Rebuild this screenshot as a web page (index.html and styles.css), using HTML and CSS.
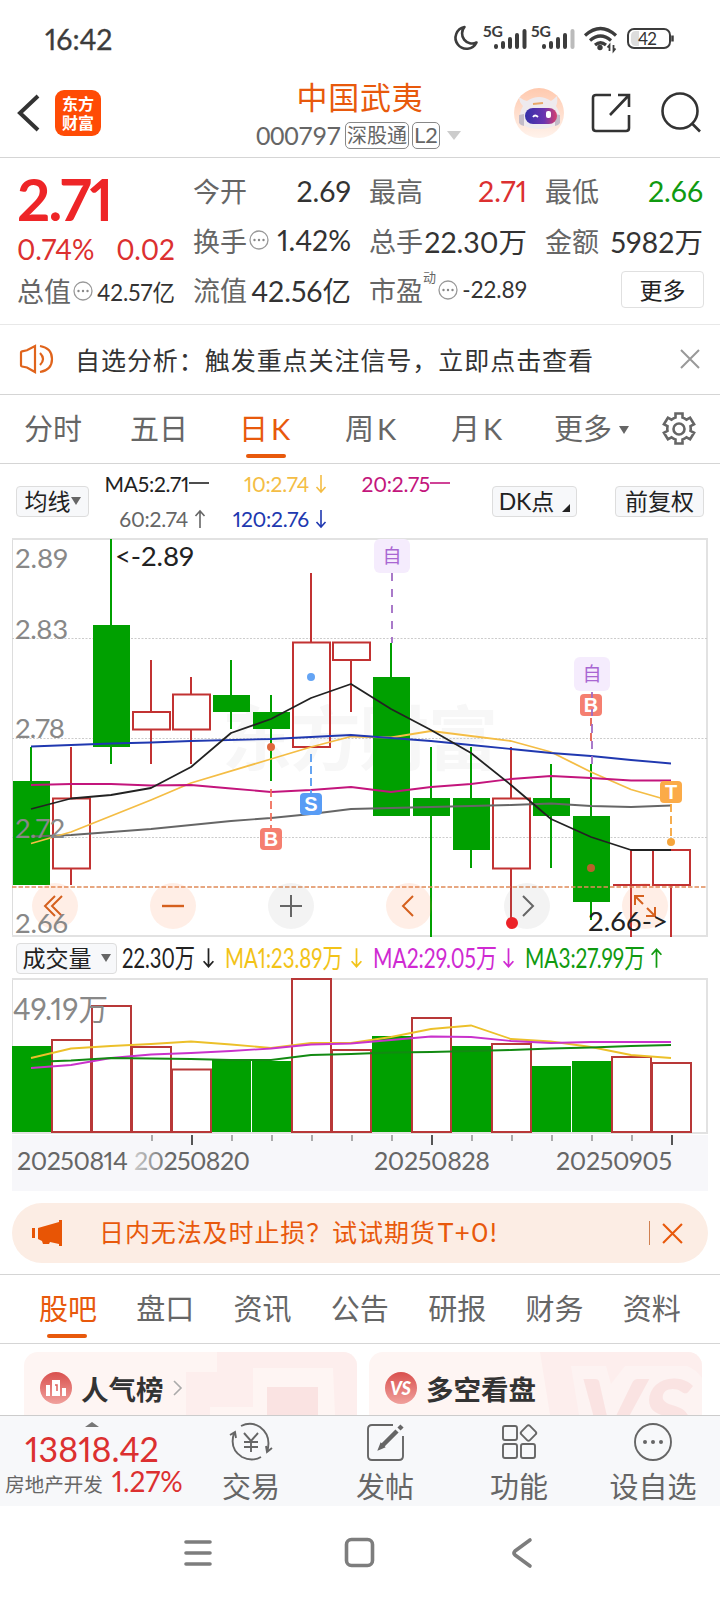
FILE: index.html
```html
<!DOCTYPE html>
<html lang="zh-CN">
<head>
  <meta charset="UTF-8" />
  <meta name="viewport" content="width=device-width, initial-scale=1.0" />
  <title>中国武夷 000797</title>
  <link rel="stylesheet" href="styles.css">
</head>
<body>
  <!-- shared icons -->
  <svg class="defs" width="0" height="0">
    <symbol id="down" viewBox="0 0 12 20"><path d="M6 1v17M1.500 13L6 18l4.500-5" fill="none" stroke="currentColor" stroke-width="1.600"/></symbol>
    <symbol id="up" viewBox="0 0 12 20"><path d="M6 19V2M1.500 7L6 2l4.500 5" fill="none" stroke="currentColor" stroke-width="1.600"/></symbol>
    <symbol id="flat" viewBox="0 0 20 20"><path d="M0 9h20" stroke="currentColor" stroke-width="1.600"/></symbol>
    <symbol id="more" viewBox="0 0 20 20"><circle cx="10" cy="10" r="9" fill="none" stroke="#999" stroke-width="1.300"/><g fill="#888"><circle cx="5.500" cy="10" r="1.200"/><circle cx="10" cy="10" r="1.200"/><circle cx="14.500" cy="10" r="1.200"/></g></symbol>
    <symbol id="close" viewBox="0 0 20 20"><path d="M1 1l18 18M19 1L1 19" fill="none" stroke="currentColor" stroke-width="2"/></symbol>
  </svg>

  <!-- STATUS BAR -->
  <div class="status">
    <span class="clock">16:42</span>
    <svg width="224" height="30" viewBox="452 24 224 30">
      <path d="M465.500 27a11 11 0 1 0 12 15.500a10 10 0 0 1-12-15.500z" fill="none" stroke="#3c3c3c" stroke-width="2.600" stroke-linejoin="round"/>
      <g font-size="15" font-weight="bold" fill="#3c3c3c"><text x="484" y="37" textLength="20" lengthAdjust="spacingAndGlyphs">5G</text><text x="532" y="37" textLength="20" lengthAdjust="spacingAndGlyphs">5G</text></g>
      <g stroke="#3c3c3c" stroke-width="4" stroke-linecap="round">
        <path d="M497 46v1M504 43v4M511 39v8M518 35v12M525.500 31v16"/>
        <path d="M545 46v1M552 43v4M559 39v8M566 35v12"/>
        <path d="M573.500 31v16" stroke="#bbb"/>
      </g>
      <g fill="none" stroke="#3c3c3c" stroke-width="3.200">
        <path d="M586 35.500q15.500-14 31 0M591 40.500q10.500-9 21 0M596 45q5.500-4.500 11 0"/>
      </g>
      <circle cx="601" cy="47.500" r="2.700" fill="#3c3c3c"/>
      <path d="M610.500 51v-6l-2 2.500M614.500 45v6l2-2.500" fill="none" stroke="#3c3c3c" stroke-width="1.800"/>
      <rect x="629" y="29" width="42" height="19" rx="6" fill="#fff" stroke="#3c3c3c" stroke-width="2"/>
      <path d="M637 31h3v15h-3q-5 0-5-5v-5q0-5 5-5z" fill="#ddd"/>
      <path d="M673.500 35.500v6" stroke="#3c3c3c" stroke-width="2.500"/>
      <text x="639" y="45" font-size="17" textLength="19" fill="#333">42</text>
    </svg>
  </div>

  <!-- HEADER -->
  <header class="header">
    <svg class="back" width="24" height="38" viewBox="0 0 24 38"><path d="M21 2L3 19l18 17" fill="none" stroke="#333" stroke-width="4"/></svg>
    <div class="logo"><span>东方</span><span>财富</span></div>
    <div class="stock">
      <div class="stock-name">中国武夷</div>
      <div class="stock-code"><span class="code">000797</span><span class="tag">深股通</span><span class="tag">L2</span><i class="caret light"></i></div>
    </div>
    <svg class="bot" width="50" height="50" viewBox="0 0 50 50">
      <defs>
        <linearGradient id="halo" x1="0" y1="0" x2="0" y2="1"><stop offset="0" stop-color="#ffc9ae"/><stop offset="1" stop-color="#fff3ec"/></linearGradient>
        <linearGradient id="visor"><stop offset="0" stop-color="#3430a8"/><stop offset=".6" stop-color="#6a35b0"/><stop offset="1" stop-color="#d8406c"/></linearGradient>
      </defs>
      <circle cx="25" cy="25" r="25" fill="url(#halo)"/>
      <path d="M5 9q4 3 8 4 12-8 24 0 3-2 6-5 1 6-1 10 5 8 4 14-3 8-20 9-17 0-20-9-1-7 3-14-4-4-4-9z" fill="#eeeaee"/>
      <path d="M5 27v8q2 3 5 3V26zM46 27v8q-2 3-5 3V26z" fill="#c3bcc8"/>
      <rect x="11" y="20" width="32" height="16" rx="8" fill="url(#visor)"/>
      <path d="M19 16l10-1" stroke="#e8a86a" stroke-width="2"/>
      <path d="M19 29q2-3 5 0" fill="none" stroke="#fff" stroke-width="1.800"/>
      <rect x="32" y="23" width="5" height="7" rx="2" fill="#fff"/>
    </svg>
    <svg class="share" width="40" height="40" viewBox="0 0 40 40"><path d="M20 2H5q-3 0-3 3v30q0 3 3 3h30q3 0 3-3V22M27 2h11v12M38 2L19 22" fill="none" stroke="#333" stroke-width="2.600"/></svg>
    <svg class="search" width="42" height="42" viewBox="0 0 42 42"><circle cx="20" cy="19" r="17.500" fill="none" stroke="#333" stroke-width="2.600"/><path d="M31.500 31L40 39.500" stroke="#333" stroke-width="2.600"/></svg>
  </header>

  <!-- QUOTE -->
  <section class="quote">
    <div class="col">
      <div class="price">2.71</div>
      <div class="cell red change"><span>0.74%</span><span>0.02</span></div>
      <div class="cell small"><label>总值<svg class="info"><use href="#more"/></svg></label><b>42.57亿</b></div>
    </div>
    <div class="col">
      <div class="cell"><label>今开</label><b>2.69</b></div>
      <div class="cell"><label>换手<svg class="info"><use href="#more"/></svg></label><b>1.42%</b></div>
      <div class="cell"><label>流值</label><b>42.56亿</b></div>
    </div>
    <div class="col">
      <div class="cell"><label>最高</label><b class="red">2.71</b></div>
      <div class="cell"><label>总手</label><b>22.30万</b></div>
      <div class="cell small"><label>市盈<sup>动</sup><svg class="info"><use href="#more"/></svg></label><b>-22.89</b></div>
    </div>
    <div class="col">
      <div class="cell"><label>最低</label><b class="green">2.66</b></div>
      <div class="cell"><label>金额</label><b>5982万</b></div>
      <div class="cell end"><button class="more-btn">更多</button></div>
    </div>
  </section>

  <!-- NOTICE -->
  <div class="notice">
    <svg width="36" height="30" viewBox="0 0 36 30" fill="none" stroke="#e0641c" stroke-width="2.200"><path d="M3 8.500q0-1 1-1.200l5-1L17 2v26l-8-4.500-5-1q-1-.2-1-1.200zM22 9q6 6 0 12M22 2q12 2 12 13t-12 13"/></svg>
    <span class="notice-text">自选分析：触发重点关注信号，立即点击查看</span>
    <svg class="notice-close" width="20" height="20"><use href="#close"/></svg>
  </div>

  <!-- PERIOD TABS -->
  <nav class="tabs">
    <a>分时</a><a>五日</a><a class="on">日<span class="k">K</span></a><a>周<span class="k">K</span></a><a>月<span class="k">K</span></a><a>更多<i class="caret"></i></a>
    <svg class="gear" width="36" height="36" viewBox="0 0 36 36" fill="none" stroke="#666" stroke-width="2.600"><path d="M14.500 2.500h7v4q2 .7 4 2.200l3.600-2 4 6.500-3.600 2q.4 2.300 0 4.600l3.600 2-4 6.500-3.600-2q-2 1.500-4 2.200v4h-7v-4q-2-.7-4-2.200l-3.600 2-4-6.500 3.600-2q-.4-2.300 0-4.600l-3.600-2 4-6.500 3.600 2q2-1.500 4-2.200z"/><circle cx="18" cy="18" r="5.500"/></svg>
  </nav>

  <!-- MA LEGEND -->
  <div class="ma">
    <button class="chip ma-btn">均线<i class="caret"></i></button>
    <div class="ma-grid">
      <span class="c5">MA5:2.71<svg width="20" height="20"><use href="#flat"/></svg></span>
      <span class="c10">10:2.74<svg class="arrow"><use href="#down"/></svg></span>
      <span class="c20">20:2.75<svg width="20" height="20"><use href="#flat"/></svg></span>
      <span class="c60">60:2.74<svg class="arrow"><use href="#up"/></svg></span>
      <span class="c120">120:2.76<svg class="arrow"><use href="#down"/></svg></span>
    </div>
    <button class="chip dk-btn">DK点<i class="corner"></i></button>
    <button class="chip fq-btn">前复权</button>
  </div>

  <!-- K LINE -->
  <svg class="kline" width="720" height="400" viewBox="0 538 720 400">
    <text x="222" y="765" font-size="70" font-weight="bold" fill="#f7f7f7" textLength="276">东方财富</text>
    <path d="M12.500 538v399" stroke="#ddd"/>
    <path d="M12 539h695v397H12" fill="none" stroke="#e2e2e2" stroke-width="2"/>
    <path d="M12 638.500h696M12 738.500h696M12 837.500h696" stroke="#ccc" stroke-dasharray="2 1.500"/>

    <!-- falling days -->
    <g fill="#00a000">
      <path d="M13 781h37v104H13zM93 625h37v122H93zM213 695h37v17h-37zM253 712h37v17h-37zM373 677h37v139h-37zM413 798h37v18h-37zM453 798h37v52h-37zM533 798h37v18h-37zM573 816h37v86h-37z"/>
      <path d="M30 747h2v34h-2zM110 539h2v86h-2zM110 747h2v17h-2zM230 660h2v69h-2zM270 695h2v86h-2zM390 643h2v34h-2zM430 747h2v190h-2zM470 747h2v121h-2zM550 764h2v104h-2zM590 764h2v156h-2z"/>
    </g>
    <!-- rising days -->
    <g fill="none" stroke="#c23232" stroke-width="2">
      <path d="M53 798.500h37v70H53zM133 712h37v17.500h-37zM173 694.500h37v35h-37zM293 642.500h37v104.500h-37zM333 642.500h37v17.500h-37zM493 798.500h37v70h-37zM653 850h37v35h-37zM613 885h37"/>
      <path d="M71 747v51M71 869v16M151 660v52M151 730v34M191 677v17M191 730v34M311 573v69M351 661v51M511 747v51M511 869v51M631 850v87M671 885v52"/>
    </g>

    <!-- averages -->
    <g fill="none" stroke-width="1.800" stroke-linejoin="round">
      <path stroke="#666" d="M31 836.500L71 835L151 829L231 821L271 818L311 814L351 809L391 808L431 807L471 806L511 805L551 803.500L591 806L631 807L671 805.500"/>
      <path stroke="#f4bd45" d="M31 843.500L71 832L151 800L191 783L271 759L311 747L351 736.500L391 737.500L431 731L471 736L511 741L551 752L591 772L631 789.500L671 801"/>
      <path stroke="#c3157c" d="M31 785L71 784L111 784L151 785.500L191 785L231 788.500L271 792L311 790L351 787L391 792L431 787L471 784L511 779L551 776L591 778L631 780.500L671 780.500"/>
      <path stroke="#2038b0" d="M31 746.500L111 743.500L151 742.500L191 741L271 739L311 737L351 735L391 738L431 741L471 745L511 749L551 753L591 756L631 760L671 763.500"/>
      <path stroke="#222" d="M31 809L71 798.500L111 795L151 788L191 767L231 733L271 719L311 698L351 684L391 709L431 730L471 753L511 785L551 819L591 837L631 850L671 850"/>
    </g>

    <!-- last price -->
    <path d="M12 887h695" stroke="#e08a58" stroke-width="1.500" stroke-dasharray="4.500 2"/>

    <!-- chart controls -->
    <g class="controls">
      <circle cx="55" cy="906" r="23" fill="#ff7a3c" fill-opacity=".13"/>
      <circle cx="173" cy="906" r="23" fill="#ff7a3c" fill-opacity=".13"/>
      <circle cx="291" cy="906" r="23" fill="#888" fill-opacity=".1"/>
      <circle cx="409" cy="906" r="23" fill="#ff7a3c" fill-opacity=".13"/>
      <circle cx="527" cy="906" r="23" fill="#888" fill-opacity=".1"/>
      <circle cx="645" cy="906" r="23" fill="#ff7a3c" fill-opacity=".13"/>
      <g fill="none" stroke="#d5601e" stroke-width="2">
        <path d="M55 896l-10 10 10 10M62 896l-10 10 10 10"/>
        <path d="M162 906h22" stroke-width="2.400"/>
        <path d="M413 896l-10 10 10 10"/>
        <path d="M635 905v-9h9M635 896l8 8M655 907v9h-9M655 916l-8-8"/>
      </g>
      <path d="M280 906h22M291 895v22M523 896l10 10-10 10" fill="none" stroke="#666" stroke-width="2"/>
    </g>

    <!-- markers -->
    <g fill="none" stroke-width="1.800">
      <path d="M392 573v70" stroke="#a06cc4" stroke-dasharray="8 8"/>
      <path d="M591 718v30" stroke="#e5604e" stroke-dasharray="8 7"/>
      <path d="M271 789v40" stroke="#f0705c" stroke-dasharray="8 4"/>
      <path d="M311 754v39" stroke="#559bf0" stroke-dasharray="8 4"/>
      <path d="M671 804v34" stroke="#f5a53c" stroke-dasharray="8 4"/>
    </g>
    <circle cx="311" cy="677" r="4" fill="#64a4f4"/>
    <circle cx="271" cy="747" r="4" fill="#e0683c"/>
    <circle cx="591" cy="868" r="4" fill="#b8602a"/>
    <circle cx="671" cy="842" r="4" fill="#f5a53c"/>
    <circle cx="512" cy="923" r="6" fill="#ec2228"/>
    <g class="mark">
      <rect x="374" y="539" width="36" height="34" rx="6" fill="#f5ecfd"/><text x="392" y="563" font-size="19" fill="#a966d2">自</text>
      <rect x="574" y="657" width="36" height="34" rx="6" fill="#f5ecfd"/><text x="592" y="681" font-size="19" fill="#a966d2">自</text>
      <rect x="580" y="694" width="22" height="22" rx="4" fill="#f57f70"/><text x="591" y="712" class="letter">B</text>
      <rect x="260" y="828" width="22" height="22" rx="4" fill="#f57f70"/><text x="271" y="846" class="letter">B</text>
      <rect x="300" y="793" width="22" height="22" rx="4" fill="#589cf5"/><text x="311" y="811" class="letter">S</text>
      <rect x="660" y="781" width="22" height="22" rx="4" fill="#fbab48"/><text x="671" y="799" class="letter">T</text>
    </g>
    <path d="M592 692v6M592 709v7M592 724v9M592 741v8M592 756v8" stroke="#a06cc4" stroke-width="1.800"/>

    <g font-size="27.500" fill="#888">
      <text x="15" y="567.500" textLength="53">2.89</text>
      <text x="15" y="639" textLength="53">2.83</text>
      <text x="15" y="738" textLength="50">2.78</text>
      <text x="15" y="838" textLength="50">2.72</text>
      <text x="15" y="933" textLength="53">2.66</text>
    </g>
    <g font-size="27.500" fill="#222">
      <text x="115" y="565.500" textLength="79">&lt;-2.89</text>
      <text x="588" y="931" textLength="80">2.66-&gt;</text>
    </g>
  </svg>

  <!-- VOLUME LEGEND -->
  <div class="vol-head">
    <button class="chip vol-btn">成交量<i class="caret"></i></button>
    <svg width="560" height="40" viewBox="118 938 560 40" font-size="27">
      <g fill="#222" color="#222"><text x="123" y="968" textLength="73" lengthAdjust="spacingAndGlyphs">22.30万</text><use href="#down" x="203" y="946" width="13" height="24"/></g>
      <g fill="#f2c318" color="#f2c318"><text x="226" y="968" textLength="118" lengthAdjust="spacingAndGlyphs">MA1:23.89万</text><use href="#down" x="351" y="946" width="13" height="24"/></g>
      <g fill="#cf2ad2" color="#cf2ad2"><text x="374" y="968" textLength="124" lengthAdjust="spacingAndGlyphs">MA2:29.05万</text><use href="#down" x="503" y="946" width="13" height="24"/></g>
      <g fill="#109a10" color="#109a10"><text x="526" y="968" textLength="120" lengthAdjust="spacingAndGlyphs">MA3:27.99万</text><use href="#up" x="651" y="946" width="13" height="24"/></g>
    </svg>
  </div>

  <!-- VOLUME -->
  <svg class="volume" width="720" height="213" viewBox="0 978 720 213">
    <path d="M12.500 978v156" stroke="#ddd"/>
    <path d="M12 979h695v154H12" fill="none" stroke="#e2e2e2" stroke-width="2"/>
    <rect x="12" y="1135" width="696" height="56" fill="#f7f7fa"/>
    <path fill="#00a000" d="M12 1046h39v86H12zM212 1059h39v73h-39zM252 1061h39v71h-39zM372 1036h39v96h-39zM452 1046h39v86h-39zM532 1066h39v66h-39zM572 1061h39v71h-39z"/>
    <g fill="none" stroke="#b83838" stroke-width="2">
      <path d="M52 1040h39v92H52zM92 1006h39v126H92zM132 1047h39v85h-39zM172 1069.500h39v62.500h-39zM292 979h39v153h-39zM332 1050h39v82h-39zM412 1018h39v114h-39zM492 1044h39v88h-39zM612 1057h39v75h-39zM652 1063h39v69h-39z"/>
    </g>
    <g fill="none" stroke-width="1.800">
      <path stroke="#ecc02a" d="M31 1058L71 1048.500L111 1046L151 1044L191 1041.500L231 1044.500L271 1048L311 1043L351 1043L391 1037L431 1029L471 1025.500L511 1039L551 1041.500L591 1047L631 1055L671 1058"/>
      <path stroke="#c932cc" d="M31 1068L71 1065L111 1058L151 1054.500L191 1053L231 1051L271 1048.500L311 1044.500L351 1043.500L391 1040L431 1036.500L471 1037L511 1041L551 1043L591 1042L631 1042L671 1042"/>
      <path stroke="#128a12" d="M31 1062L71 1060.500L111 1058L151 1058.500L191 1059L231 1060L271 1060L311 1055L351 1054L391 1052.500L431 1052L471 1051L511 1050L551 1048.500L591 1047.500L631 1046L671 1045"/>
    </g>
    <text x="13" y="1020" font-size="30" fill="#888" textLength="95" lengthAdjust="spacingAndGlyphs">49.19万</text>
    <path d="M152 1135v6M232 1135v6M272 1135v6M312 1135v6M352 1135v6M392 1135v6M472 1135v6M512 1135v6M552 1135v6M592 1135v6M632 1135v6" stroke="#aaa" stroke-width="2"/>
    <path d="M192 1135v10M432 1135v10M672 1135v10" stroke="#555" stroke-width="2"/>
    <defs><linearGradient id="fade" gradientUnits="userSpaceOnUse" x1="134" y1="0" x2="170" y2="0"><stop offset="0" stop-color="#ccc"/><stop offset="1" stop-color="#666"/></linearGradient></defs>
    <g font-size="25" fill="#666">
      <text x="17" y="1170" textLength="111">20250814</text>
      <text x="134" y="1170" textLength="116" fill="url(#fade)">20250820</text>
      <text x="374" y="1170" textLength="116">20250828</text>
      <text x="556" y="1170" textLength="116">20250905</text>
    </g>
  </svg>

  <!-- PROMO -->
  <div class="promo">
    <svg width="30" height="26" viewBox="0 0 30 26" fill="#e85505"><path d="M0 8h3v10H0zM6 8L27 2V0h3v26h-3v-2l-9-2-1 2h-6l-1-3-4-2z"/></svg>
    <span class="promo-text">日内无法及时止损？试试期货<span class="latin">T+0!</span></span>
    <i class="bar"></i>
    <svg class="promo-close" width="21" height="21" viewBox="0 0 20 20"><use href="#close"/></svg>
  </div>

  <!-- INFO TABS -->
  <nav class="tabs info-tabs">
    <a class="on">股吧</a><a>盘口</a><a>资讯</a><a>公告</a><a>研报</a><a>财务</a><a>资料</a>
  </nav>

  <div class="cards">
    <div class="card">
      <svg class="card-bg" width="333" height="63" viewBox="0 0 333 63"><path d="M193 0h140v63h-22l-2-47h-80v39h-43v8h-24V20h31z" fill="#fdeeed"/><path d="M243 35h51v28h-51z" fill="#fae3e2"/></svg>
      <svg width="32" height="32" viewBox="0 0 32 32"><circle cx="16" cy="16" r="16" fill="url(#badge)"/><path d="M6 13h4v11H6zM12 8h8v16h-8zM22 16h4v8h-4z" fill="#fff"/><path d="M15 13h2v6" fill="none" stroke="#de605c" stroke-width="1.500"/></svg>
      <span>人气榜</span>
      <svg width="10" height="16" viewBox="0 0 10 16"><path d="M1 1l7 7-7 7" fill="none" stroke="#aaa" stroke-width="1.600"/></svg>
    </div>
    <div class="card">
      <svg class="card-bg" width="333" height="63" viewBox="0 0 333 63">
        <path d="M171 0h162v63H181z" fill="#fdeeed"/>
        <path d="M202 14h35l5 18 14-18h62q10 4 15 12v37H210z" fill="#fdf3f2"/>
        <text x="210" y="92" font-size="90" font-weight="900" font-style="italic" textLength="114" lengthAdjust="spacingAndGlyphs" fill="#fae3e2">VS</text>
      </svg>
      <svg width="32" height="32" viewBox="0 0 32 32"><defs><linearGradient id="badge" x1="0" y1="0" x2="0" y2="1"><stop offset="0" stop-color="#d9504e"/><stop offset="1" stop-color="#f0a09c"/></linearGradient></defs><circle cx="16" cy="16" r="16" fill="url(#badge)"/><text x="5" y="23" font-size="19" font-weight="900" font-style="italic" fill="#fff" textLength="21" lengthAdjust="spacingAndGlyphs">VS</text></svg>
      <span>多空看盘</span>
    </div>
  </div>

  <!-- BOTTOM BAR -->
  <footer class="bottom">
    <div class="index">
      <i class="tri"></i>
      <div class="index-value">13818.42</div>
      <div class="index-name">房地产开发<b>1.27%</b></div>
    </div>
    <div class="action">
      <svg width="44" height="40" viewBox="0 0 44 40" fill="none" stroke="#666" stroke-width="1.900"><path d="M12 4q10-5 19 1 12 9 7 25M32 35q-9 5-19 0Q0 27 5 11M1 13l5-3 1 6M43 26l-5 4-1-6M15 11l7 8 7-8M22 19v11M15 20h14M15 25h14"/></svg>
      <span>交易</span>
    </div>
    <div class="action">
      <svg width="38" height="40" viewBox="0 0 38 40" fill="none" stroke="#666" stroke-width="1.900"><path d="M27 3H6Q2 3 2 7v27q0 4 4 4h27q4 0 4-4V14"/><path d="M16 24L31 9M33 7l3-3" stroke-width="4.500"/><path d="M13 27l5-2-3-3z" fill="#666"/></svg>
      <span>发帖</span>
    </div>
    <div class="action">
      <svg width="36" height="40" viewBox="0 0 36 40" fill="none" stroke="#666" stroke-width="1.900"><rect x="2" y="4" width="14" height="14" rx="2"/><rect x="2" y="22" width="14" height="14" rx="2"/><rect x="20" y="22" width="14" height="14" rx="2"/><rect x="21.500" y="5" width="12" height="12" rx="2" transform="rotate(45 27.500 11)"/></svg>
      <span>功能</span>
    </div>
    <div class="action">
      <svg width="40" height="40" viewBox="0 0 40 40"><circle cx="20" cy="20" r="18" fill="none" stroke="#666" stroke-width="1.900"/><g fill="#666"><circle cx="12" cy="20" r="2"/><circle cx="20" cy="20" r="2"/><circle cx="28" cy="20" r="2"/></g></svg>
      <span>设自选</span>
    </div>
  </footer>

  <!-- SYSTEM NAV -->
  <svg class="sysnav" width="720" height="94" viewBox="0 1506 720 94" fill="none" stroke="#7d7d7d" stroke-width="3.600" stroke-linecap="round" stroke-linejoin="round">
    <path d="M186 1542h24M186 1553h24M186 1564h24"/>
    <rect x="346.500" y="1539.500" width="26" height="26" rx="5"/>
    <path d="M530 1540l-15 11q-2 2 0 4l15 11"/>
  </svg>
</body>
</html>
```
FILE: styles.css
```css
* {
  box-sizing: border-box;
}
body {
  margin: 0;
  width: 720px;
  height: 1600px;
  overflow: hidden;
  background: #fff;
  color: #333;
  font-family: Lato, "Noto Sans CJK SC", sans-serif;
  font-variant-numeric: proportional-nums;
}
svg {
  display: block;
  flex: none;
  overflow: visible;
}
.defs {
  position: absolute;
}
button {
  font-family: inherit;
  color: #222;
  padding: 0;
  margin: 0;
}
.red {
  color: #dc3030;
}
.green {
  color: #109a10;
}
.caret {
  display: inline-block;
  border: 5px solid transparent;
  border-top: 8px solid #666;
  border-bottom: 0;
}
.caret.light {
  border-width: 9px 7px 0;
  border-top-color: #ccc;
  margin-left: 7px;
}

/* status bar */
.status {
  height: 78px;
  display: flex;
  align-items: center;
  justify-content: space-between;
  padding: 0 45px 0 45px;
}
.clock {
  font-size: 28.5px;
  color: #3c3c3c;
  -webkit-text-stroke: 0.3px #3c3c3c;
}

/* header */
.header {
  height: 80px;
  display: flex;
  align-items: center;
  padding: 0 18px 10px 17px;
  border-bottom: 1px solid #d5d5d5;
}
.logo {
  width: 46px;
  height: 46px;
  margin-left: 14px;
  border-radius: 9px;
  background: #ff4b05;
  color: #fff;
  font-size: 16px;
  line-height: 19px;
  font-weight: bold;
  display: flex;
  flex-direction: column;
  align-items: center;
  justify-content: center;
}
.stock {
  width: 208px;
  margin-left: 155px;
  padding-top: 6px;
}
.stock-name {
  font-size: 31px;
  line-height: 36px;
  color: #e8590c;
  text-align: center;
  letter-spacing: 0.8px;
}
.stock-code {
  display: flex;
  align-items: center;
  height: 38px;
  padding-top: 3px;
  color: #666;
}
.code {
  font-size: 25px;
  width: 88px;
  font-variant-numeric: tabular-nums;
  letter-spacing: -0.4px;
}
.tag {
  height: 27px;
  line-height: 24px;
  font-size: 20px;
  border: 1.5px solid #888;
  border-radius: 5px;
  padding: 0 1px;
  margin-left: 1px;
  white-space: nowrap;
}
.tag + .tag {
  font-size: 22px;
  margin-left: 3px;
}
.bot {
  margin-left: 50px;
}
.share {
  margin-left: 27px;
}
.search {
  margin-left: 29px;
}

/* quote */
.quote {
  height: 167px;
  display: flex;
  gap: 18px;
  padding: 8px 0 0 17px;
  border-bottom: 1px solid #e8e8e8;
}
.col {
  width: 158px;
}
.price {
  height: 66px;
  font-size: 58px;
  line-height: 65px;
  font-weight: bold;
  color: #ee2527;
  letter-spacing: -1.8px;
}
.cell {
  height: 49.5px;
  display: flex;
  align-items: center;
  justify-content: space-between;
  white-space: nowrap;
}
.cell label {
  display: flex;
  align-items: center;
  font-size: 27px;
  color: #666;
}
.cell b {
  font-weight: normal;
  font-size: 28.5px;
}
.cell.small b {
  font-size: 22.5px;
}
.cell.change {
  height: 33px;
  margin-bottom: 1px;
  font-size: 28px;
}
.cell.end {
  justify-content: flex-end;
}
.cell sup {
  font-size: 13px;
  align-self: flex-start;
  line-height: 14px;
}
.info {
  width: 20px;
  height: 20px;
  margin-left: 2px;
}
.more-btn {
  width: 83px;
  height: 37px;
  margin-right: -1px;
  background: #fff;
  border: 1.5px solid #e0e0e0;
  border-radius: 4px;
  font-size: 23px;
  line-height: 32px;
}

/* notice */
.notice {
  height: 70px;
  display: flex;
  align-items: center;
  padding: 0 20px 2px 18px;
  border-bottom: 1px solid #d5d5d5;
}
.notice-text {
  margin-left: 21px;
  font-size: 25px;
  letter-spacing: 0.95px;
}
.notice-close {
  margin-left: auto;
  color: #999;
}

/* tabs */
.tabs {
  height: 69px;
  display: flex;
  align-items: center;
  padding-left: 24px;
  border-bottom: 1px solid #d5d5d5;
  color: #666;
  font-size: 29px;
}
.tabs a {
  width: 106px;
  height: 68px;
  line-height: 68px;
  position: relative;
  white-space: nowrap;
}
.k {
  margin-left: 3px;
}
.tabs .on + a,
.tabs .on + a + a {
  padding-left: 3px;
}
.tabs .on {
  color: #e8590c;
  padding-left: 3px;
}
.tabs .caret {
  margin-left: 7px;
  vertical-align: 6px;
}
.tabs .on::after {
  content: "";
  position: absolute;
  left: 10px;
  bottom: 5px;
  width: 40px;
  height: 4px;
  border-radius: 2px;
  background: #e8590c;
}
.gear {
  margin-left: 1px;
}

/* MA legend */
.ma {
  height: 74px;
  display: flex;
  align-items: center;
  padding-left: 16px;
}
.chip {
  height: 31px;
  background: #f7f8fa;
  border: 1px solid #ddd;
  border-radius: 4px;
  font-size: 23px;
  line-height: 28px;
  white-space: nowrap;
  display: flex;
  align-items: center;
  justify-content: center;
}
.ma-btn {
  width: 73px;
}
.ma-grid {
  width: 362px;
  display: grid;
  grid-template-columns: 120px 118px 123px;
  row-gap: 5px;
  font-size: 21px;
  line-height: 30px;
  letter-spacing: -0.25px;
  color: #666;
}
.ma-grid span {
  display: flex;
  align-items: center;
  justify-content: flex-end;
}
.arrow {
  width: 12px;
  height: 20px;
  margin-left: 6px;
}
.c5 {
  color: #222;
}
.c60 {
  padding-right: 3px;
}
.c10 {
  color: #f4bd45;
}
.c20 {
  color: #c3157c;
}
.c120 {
  color: #2038b0;
}
.dk-btn {
  width: 85px;
  margin-left: 41px;
}
.corner {
  border-left: 8px solid transparent;
  border-bottom: 8px solid #222;
  margin: 13px 0 0 8px;
}
.fq-btn {
  width: 89px;
  margin-left: 38px;
}

/* charts */
.mark text {
  text-anchor: middle;
}
.mark .letter {
  font-family: "Liberation Sans", sans-serif;
  font-size: 20px;
  font-weight: bold;
  fill: #fff;
}
.vol-head {
  height: 40px;
  display: flex;
  align-items: center;
  padding-left: 16px;
}
.vol-btn {
  width: 101px;
}
.vol-btn .caret {
  margin-left: 9px;
}

/* promo */
.promo {
  height: 60px;
  margin: 12px 12px 11px;
  border-radius: 30px;
  background: #fcede4;
  color: #e8590c;
  display: flex;
  align-items: center;
  padding: 0 25px 0 20px;
}
.promo-text {
  margin-left: 37px;
  font-size: 25px;
  line-height: 36px;
  padding-bottom: 2px;
  letter-spacing: 0.9px;
  white-space: nowrap;
}
.latin {
  font-size: 26.5px;
  letter-spacing: 1.2px;
  margin-left: 2px;
}
.bar {
  width: 1px;
  height: 24px;
  margin-left: auto;
  margin-right: 12px;
  background: #d08050;
}

/* info tabs */
.info-tabs {
  height: 70px;
  padding-left: 39px;
  border-top: 1px solid #d5d5d5;
}
.info-tabs a {
  width: 97.3px;
}
.info-tabs a.on,
.info-tabs .on + a,
.info-tabs .on + a + a {
  padding-left: 0;
}
.info-tabs .on::after {
  left: 8px;
}
.cards {
  height: 71px;
  display: flex;
  gap: 12px;
  padding: 8px 0 0 24px;
  overflow: hidden;
}
.card {
  position: relative;
  width: 333px;
  height: 63px;
  border-radius: 14px 14px 0 0;
  overflow: hidden;
  background: #fef5f3;
  display: flex;
  align-items: center;
  gap: 9px;
  padding: 8px 0 0 16px;
  font-size: 27.5px;
  font-weight: bold;
}
.card > * {
  position: relative;
}
.card .card-bg {
  position: absolute;
  left: 0;
  top: 0;
}

/* bottom bar */
.bottom {
  height: 91px;
  display: flex;
  background: #f7f8fa;
  border-top: 1px solid #ccc;
}
.index {
  width: 184px;
  display: flex;
  flex-direction: column;
  align-items: center;
  color: #dc3030;
}
.tri {
  border: 7px solid transparent;
  border-top: 0;
  border-bottom: 5px solid #777;
  margin-top: 6px;
}
.index-value {
  font-size: 34px;
  line-height: 42px;
  margin-top: 1px;
}
.index-name {
  font-size: 19.5px;
  line-height: 26px;
  margin-top: -2px;
  padding-left: 4px;
  color: #666;
  white-space: nowrap;
}
.index-name b {
  font-size: 28px;
  font-weight: normal;
  color: #dc3030;
  margin-left: 9px;
}
.action {
  width: 134px;
  display: flex;
  flex-direction: column;
  align-items: center;
  padding-top: 6px;
  font-size: 29px;
  line-height: 49px;
  color: #666;
}
```
